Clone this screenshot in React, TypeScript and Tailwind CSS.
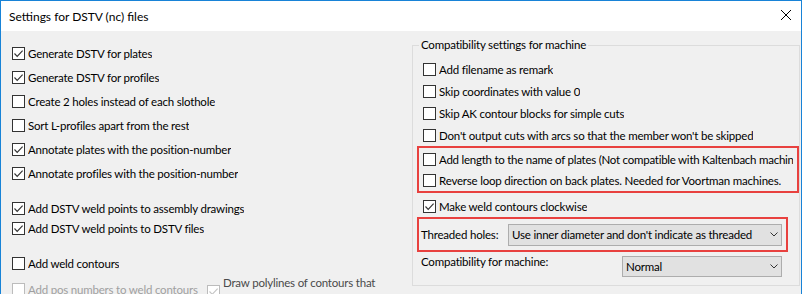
import React from "react";

interface BoxProps {
  checked?: boolean;
  disabled?: boolean;
}

const Box: React.FC<BoxProps> = ({ checked, disabled }) => (
  <span
    className={`w-[13px] h-[13px] shrink-0 bg-white border flex items-center justify-center ${
      disabled ? "border-[#bcbcbc]" : "border-[#333333]"
    }`}
  >
    {checked && (
      <svg width="11" height="11" viewBox="0 0 11 11">
        <path
          d="M1.5 5.5L4.2 8.3L9.6 2.6"
          fill="none"
          stroke={disabled ? "#c4c4c4" : "#333333"}
          strokeWidth="1.15"
        />
      </svg>
    )}
  </span>
);

interface RowProps {
  label: string;
  checked?: boolean;
  className: string;
}

const Row: React.FC<RowProps> = ({ label, checked, className }) => (
  <div className={`flex items-center gap-[3px] min-w-0 shrink-0 ${className}`}>
    <Box checked={checked} />
    <span className="whitespace-nowrap overflow-hidden">{label}</span>
  </div>
);

const Chevron = () => (
  <svg width="8" height="5" viewBox="0 0 8 5">
    <path d="M0.5 0.5L4 4L7.5 0.5" fill="none" stroke="#333333" strokeWidth="1" />
  </svg>
);

const Select: React.FC<{ value: string; className: string }> = ({ value, className }) => (
  <div
    className={`bg-[#e1e1e1] border border-[#adadad] flex items-center justify-between pl-[3px] pr-[3px] ${className}`}
  >
    <span className="whitespace-nowrap">{value}</span>
    <Chevron />
  </div>
);

export default function App() {
  return (
    <div className="w-[802px] h-[294px] overflow-hidden flex flex-col border-t border-l border-r border-[#1883d7] bg-[#f0f0f0] text-[11.5px] tracking-[-0.2px] leading-[15px] text-black font-['Lato',sans-serif]">
      {/* Title bar */}
      <div className="h-[30px] shrink-0 bg-white flex items-center justify-between pl-[8px] pr-[10px]">
        <span className="text-[12px] tracking-normal">Settings for DSTV (nc) files</span>
        <svg width="10" height="10" viewBox="0 0 10 10" className="mb-[3px]">
          <path d="M0 0L10 10M10 0L0 10" stroke="#000" strokeWidth="1" />
        </svg>
      </div>

      <div className="flex flex-1 min-h-0">
        {/* Left column */}
        <div className="w-[411px] shrink-0 pl-[11px] pt-[10px] flex flex-col">
          <Row className="h-[24px]" checked label="Generate DSTV for plates" />
          <Row className="h-[24px]" checked label="Generate DSTV for profiles" />
          <Row className="h-[24px]" label="Create 2 holes instead of each slothole" />
          <Row className="h-[24px]" label="Sort L-profiles apart from the rest" />
          <Row className="h-[24px]" checked label="Annotate plates with the position-number" />
          <Row className="h-[24px]" checked label="Annotate profiles with the position-number" />

          <Row className="h-[20px] mt-[13px]" checked label="Add DSTV weld points to assembly drawings" />
          <Row className="h-[20px]" checked label="Add DSTV weld points to DSTV files" />

          <Row className="h-[24px] mt-[13px]" label="Add weld contours" />

          <div className="flex items-start shrink-0">
            <div className="w-[195px] h-[24px] mt-[2px] flex items-center gap-[3px]">
              <Box disabled />
              <span className="whitespace-nowrap text-[#a0a0a0]">Add pos numbers to weld contours</span>
            </div>
            <div className="flex items-start gap-[3px]">
              <span className="mt-[10px]">
                <Box checked disabled />
              </span>
              <span className="whitespace-nowrap text-[#4a4a4a]">Draw polylines of contours that</span>
            </div>
          </div>
        </div>

        {/* Compatibility group */}
        <fieldset className="w-[385px] mt-[6px] self-start border border-[#dcdcdc]">
          <legend className="ml-[6px] px-[2px] leading-[16px]">Compatibility settings for machine</legend>
          <div className="pt-[5px] pb-[8px] flex flex-col">
            <Row className="h-[22px] pl-[10px]" label="Add filename as remark" />
            <Row className="h-[22px] pl-[10px]" label="Skip coordinates with value 0" />
            <Row className="h-[22px] pl-[10px]" label="Skip AK contour blocks for simple cuts" />
            <Row className="h-[22px] pl-[10px]" label="Don't output cuts with arcs so that the member won't be skipped" />

            <div className="ml-[4px] w-[382px] border-2 border-[#e8413f] pt-[1px] pl-[4px] pr-[4px] flex flex-col">
              <Row className="h-[21px] tracking-[-0.25px]" label="Add length to the name of plates (Not compatible with Kaltenbach machines)" />
              <Row className="h-[21px]" label="Reverse loop direction on back plates. Needed for Voortman machines." />
            </div>

            <Row className="h-[22px] mt-[2px] pl-[10px]" checked label="Make weld contours clockwise" />

            <div className="ml-[4px] w-[371px] h-[35px] border-2 border-[#e8413f] pl-[2px] flex items-center">
              <span className="w-[87px] shrink-0">Threaded holes:</span>
              <Select className="w-[274px] h-[22px]" value="Use inner diameter and don't indicate as threaded" />
            </div>

            <div className="mt-[4px] pl-[8px] flex items-start">
              <span className="w-[201px] shrink-0 -mt-[2px]">Compatibility for machine:</span>
              <Select className="w-[160px] h-[21px]" value="Normal" />
            </div>
          </div>
        </fieldset>
      </div>
    </div>
  );
}
